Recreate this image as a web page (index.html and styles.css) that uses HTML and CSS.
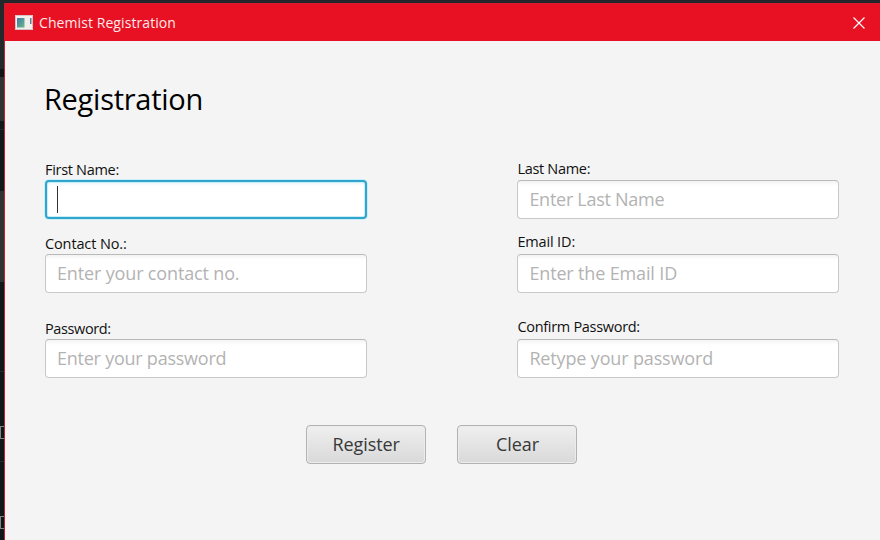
FILE: index.html
```html
<!DOCTYPE html>
<html lang="en">
<head>
<meta charset="utf-8">
<title>Chemist Registration</title>
<link rel="stylesheet" href="styles.css">
</head>
<body>
<aside class="backdrop"><span class="glyph"></span><span class="glyph"></span></aside>
<main class="window">
  <header class="titlebar">
    <svg class="app-icon" width="18" height="15" viewBox="0 0 18 15"><defs><linearGradient id="g" x2="1" y2="1"><stop offset="0" stop-color="#3f79a4"/><stop offset="1" stop-color="#6db98a"/></linearGradient></defs><path d="M0 0h18v15H0z" fill="#f3efed"/><path d="M.5 .5h17v14H.5z" fill="none" stroke="#d3c5c6"/><path d="M2 3h7.500v9.500H2z" fill="url(#g)"/><path d="M15 3h1.500v6H15z" fill="#607e91"/></svg>
    <span class="title">Chemist Registration</span>
    <svg class="close" width="12" height="12" viewBox="0 0 12 12"><path d="M.5 .5l11 11M11.500 .5l-11 11" stroke="#fff" stroke-width="1.150" fill="none"/></svg>
  </header>
  <form class="form">
    <h1 class="heading"><span>Registration</span></h1>
    <div class="grid">
      <div class="field"><label class="label low l-first">First Name:</label><div class="input focused"><span class="caret"></span></div></div>
      <div class="field"><label class="label l-last">Last Name:</label><div class="input"><span class="p-last">Enter Last Name</span></div></div>
      <div class="field"><label class="label low l-contact">Contact No.:</label><div class="input"><span class="p-contact">Enter your contact no.</span></div></div>
      <div class="field"><label class="label l-email">Email ID:</label><div class="input"><span class="p-email">Enter the Email ID</span></div></div>
      <div class="field"><label class="label low l-pass">Password:</label><div class="input"><span class="p-pass">Enter your password</span></div></div>
      <div class="field"><label class="label l-confirm">Confirm Password:</label><div class="input"><span class="p-confirm">Retype your password</span></div></div>
    </div>
    <div class="actions"><button type="button" class="button register">Register</button><button type="button" class="button">Clear</button></div>
  </form>
</main>
</body>
</html>
```
FILE: styles.css
```css
* { box-sizing: border-box; }
body {
  margin: 0; width: 880px; height: 540px; overflow: hidden; display: flex;
  font-family: "Open Sans", "Noto Sans", sans-serif;
  background: #24252b;
}
.backdrop {
  width: 4px; height: 540px; overflow: hidden; flex: none;
  display: flex; flex-direction: column; padding-top: 426px; gap: 77px;
  background: linear-gradient(#23282b 0 69px, #111517 69px 77px, #303233 77px 121px, #10181a 121px 129px, #23292b 129px 130px, #10181a 130px 191px, #303233 191px 282px, #0f1719 282px 371px, #252c2e 371px 372px, #0f1719 372px 461px, #252c2e 461px 462px, #0f1719 462px);
}
.glyph { height: 13px; border: 1px solid #7e8684; border-right: 0; }
.window { width: 876px; height: 537px; margin-top: 3px; background: #f4f4f4; border-left: 1px solid #c91f30; }
.titlebar { height: 38px; background: #e81123; display: flex; align-items: center; color: #ffe9eb; padding: 0 15px 0 10px; border-top: 1px solid #d51e2d; }
.app-icon { flex: none; margin-right: 6px; }
.title { font-size: 14px; letter-spacing: .08px; flex: 1; }
.form { padding: 35px 41px 0 40px; }
.heading { margin: 0; height: 46px; font-size: 29px; line-height: 46px; font-weight: 400; color: #000; letter-spacing: -.28px; margin-left: -1px; }
.grid { display: grid; grid-template-columns: 322px 322px; grid-template-rows: 61px 74px 84.500px; column-gap: 150.400px; margin-top: 36px; }
.field { display: flex; flex-direction: column; justify-content: flex-end; }
.label { font-size: 14.500px; line-height: 20px; height: 21px; color: #111; font-weight: 400; letter-spacing: -.3px; }
.low { height: 20px; }
.l-email, .l-confirm { height: 22px; }
.l-contact { letter-spacing: -.12px; }
.l-pass { letter-spacing: -.38px; }
.l-email { letter-spacing: -.15px; }
.input {
  height: 39px; flex: none; display: flex; align-items: center; padding: 0 11px;
  font-size: 18px; line-height: 24px; color: #b3b3b3; white-space: nowrap;
  letter-spacing: -.15px;
  border: 1px solid #c8c8c8; border-top-color: #b9b9b9; border-radius: 4px;
  background: linear-gradient(#f3f3f3, #fff 5px);
}
.input span { margin-top: -1px; }
.p-last { letter-spacing: -.27px; }
.p-pass { letter-spacing: -.24px; }
.focused { border: 2px solid #31a5cb; padding-left: 10px; background: #fff; box-shadow: 0 0 0 1px #c9effb, inset 0 0 0 1px #c9effb, inset 0 2px 3px #e6f6fb; }
.caret { width: 1px; height: 27px; background: #333; }
.actions { display: flex; gap: 31.300px; margin: 47px 0 0 261.200px; }
.button {
  width: 120px; height: 39px; padding: 0 0 1px; color: #383838;
  font: 400 18px/24px "Open Sans", "Noto Sans", sans-serif; letter-spacing: -.1px;
  border: 1px solid #b2b2b2; border-radius: 4px;
  background: linear-gradient(#efefef, #d9d9d9); box-shadow: inset 0 0 0 1px #ececec;
}
```
